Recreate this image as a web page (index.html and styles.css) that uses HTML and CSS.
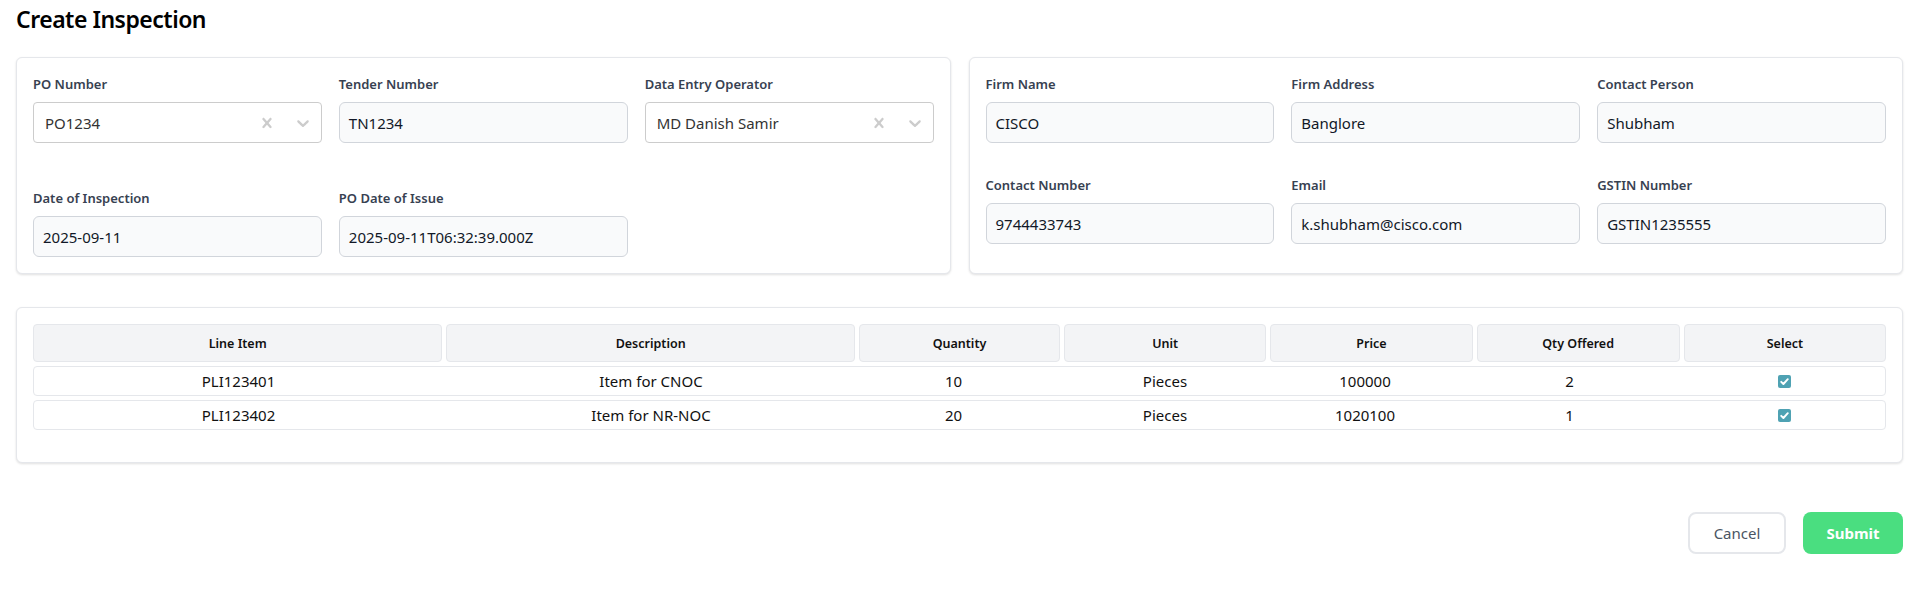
FILE: index.html
```html
<!DOCTYPE html>
<html lang="en">
<head>
<meta charset="utf-8">
<title>Create Inspection</title>
<link rel="stylesheet" href="styles.css">
</head>
<body>
<div class="page">
  <h1 class="title">Create Inspection</h1>

  <div class="cards">
    <section class="card">
      <div class="grid grid-po">
        <div class="field">
          <label class="label">PO Number</label>
          <div class="select">
            <span class="select-value">PO1234</span>
            <span class="indicator"><svg viewBox="0 0 20 20" width="20" height="20"><path d="M14.348 14.849c-0.469 0.469-1.229 0.469-1.697 0l-2.651-3.030-2.651 3.029c-0.469 0.469-1.229 0.469-1.697 0-0.469-0.469-0.469-1.229 0-1.697l2.758-3.15-2.759-3.152c-0.469-0.469-0.469-1.228 0-1.697s1.228-0.469 1.697 0l2.652 3.031 2.651-3.031c0.469-0.469 1.228-0.469 1.697 0s0.469 1.229 0 1.697l-2.758 3.152 2.758 3.15c0.469 0.469 0.469 1.229 0 1.698z"/></svg></span>
            <span class="indicator"><svg viewBox="0 0 20 20" width="20" height="20"><path d="M4.516 7.548c0.436-0.446 1.043-0.481 1.576 0l3.908 3.747 3.908-3.747c0.533-0.481 1.141-0.446 1.574 0 0.436 0.445 0.408 1.197 0 1.615-0.406 0.418-4.695 4.502-4.695 4.502-0.217 0.223-0.502 0.335-0.787 0.335s-0.57-0.112-0.789-0.335c0 0-4.287-4.084-4.695-4.502s-0.436-1.17 0-1.615z"/></svg></span>
          </div>
        </div>
        <div class="field">
          <label class="label">Tender Number</label>
          <div class="input">TN1234</div>
        </div>
        <div class="field">
          <label class="label">Data Entry Operator</label>
          <div class="select">
            <span class="select-value">MD Danish Samir</span>
            <span class="indicator"><svg viewBox="0 0 20 20" width="20" height="20"><path d="M14.348 14.849c-0.469 0.469-1.229 0.469-1.697 0l-2.651-3.030-2.651 3.029c-0.469 0.469-1.229 0.469-1.697 0-0.469-0.469-0.469-1.229 0-1.697l2.758-3.15-2.759-3.152c-0.469-0.469-0.469-1.228 0-1.697s1.228-0.469 1.697 0l2.652 3.031 2.651-3.031c0.469-0.469 1.228-0.469 1.697 0s0.469 1.229 0 1.697l-2.758 3.152 2.758 3.15c0.469 0.469 0.469 1.229 0 1.698z"/></svg></span>
            <span class="indicator"><svg viewBox="0 0 20 20" width="20" height="20"><path d="M4.516 7.548c0.436-0.446 1.043-0.481 1.576 0l3.908 3.747 3.908-3.747c0.533-0.481 1.141-0.446 1.574 0 0.436 0.445 0.408 1.197 0 1.615-0.406 0.418-4.695 4.502-4.695 4.502-0.217 0.223-0.502 0.335-0.787 0.335s-0.57-0.112-0.789-0.335c0 0-4.287-4.084-4.695-4.502s-0.436-1.17 0-1.615z"/></svg></span>
          </div>
        </div>
        <div class="field">
          <label class="label">Date of Inspection</label>
          <div class="input">2025-09-11</div>
        </div>
        <div class="field">
          <label class="label">PO Date of Issue</label>
          <div class="input">2025-09-11T06:32:39.000Z</div>
        </div>
      </div>
    </section>

    <section class="card">
      <div class="grid grid-firm">
        <div class="field">
          <label class="label">Firm Name</label>
          <div class="input">CISCO</div>
        </div>
        <div class="field">
          <label class="label">Firm Address</label>
          <div class="input">Banglore</div>
        </div>
        <div class="field">
          <label class="label">Contact Person</label>
          <div class="input">Shubham</div>
        </div>
        <div class="field">
          <label class="label">Contact Number</label>
          <div class="input">9744433743</div>
        </div>
        <div class="field">
          <label class="label">Email</label>
          <div class="input">k.shubham@cisco.com</div>
        </div>
        <div class="field">
          <label class="label">GSTIN Number</label>
          <div class="input">GSTIN1235555</div>
        </div>
      </div>
    </section>
  </div>

  <section class="card table-card">
    <div class="table">
      <div class="thead">
        <div class="th">Line Item</div>
        <div class="th">Description</div>
        <div class="th">Quantity</div>
        <div class="th">Unit</div>
        <div class="th">Price</div>
        <div class="th">Qty Offered</div>
        <div class="th">Select</div>
      </div>
      <div class="tr">
        <div class="td">PLI123401</div>
        <div class="td">Item for CNOC</div>
        <div class="td td-qty">10</div>
        <div class="td">Pieces</div>
        <div class="td td-price">100000</div>
        <div class="td td-offered">2</div>
        <div class="td"><span class="check"><svg viewBox="0 0 13 13" width="13" height="13"><path d="M3.2 6.8 L5.4 9 L9.8 4.2" fill="none" stroke="#fff" stroke-width="1.9" stroke-linecap="round" stroke-linejoin="round"/></svg></span></div>
      </div>
      <div class="tr">
        <div class="td">PLI123402</div>
        <div class="td">Item for NR-NOC</div>
        <div class="td td-qty">20</div>
        <div class="td">Pieces</div>
        <div class="td td-price">1020100</div>
        <div class="td td-offered">1</div>
        <div class="td"><span class="check"><svg viewBox="0 0 13 13" width="13" height="13"><path d="M3.2 6.8 L5.4 9 L9.8 4.2" fill="none" stroke="#fff" stroke-width="1.9" stroke-linecap="round" stroke-linejoin="round"/></svg></span></div>
      </div>
    </div>
  </section>

  <div class="actions">
    <button class="btn btn-cancel" type="button">Cancel</button>
    <button class="btn btn-submit" type="button">Submit</button>
  </div>
</div>
</body>
</html>
```

FILE: styles.css
```css
* {
  box-sizing: border-box;
}

html, body {
  margin: 0;
  background: #ffffff;
}

body {
  font-family: "Noto Sans", "Open Sans", Arial, sans-serif;
  color: #111827;
}

.page {
  padding: 3px 16px 16px 16px;
}

.title {
  margin: 0 0 22px 0;
  font-size: 23px;
  line-height: 32px;
  font-weight: 600;
  letter-spacing: -0.5px;
  color: #000000;
}

.cards {
  display: flex;
  gap: 18px;
  align-items: stretch;
}

.card {
  flex: 1 1 0;
  background: #ffffff;
  border: 1px solid #e5e7eb;
  border-radius: 6px;
  box-shadow: 0 1px 3px rgba(0, 0, 0, 0.08), 0 1px 2px rgba(0, 0, 0, 0.05);
  padding: 16px;
}

.grid {
  display: grid;
  grid-template-columns: repeat(3, 1fr);
  column-gap: 17px;
}

.grid-po {
  row-gap: 45px;
}

.grid-firm {
  row-gap: 32px;
}

.field {
  display: flex;
  flex-direction: column;
}

.label {
  font-size: 13px;
  line-height: 20px;
  font-weight: 600;
  color: #374151;
  margin-bottom: 8px;
}

.input {
  height: 41px;
  display: flex;
  align-items: center;
  padding: 0 9px;
  background: #f9fafb;
  border: 1px solid #d1d5db;
  border-radius: 6px;
  font-size: 15px;
  color: #111827;
  white-space: nowrap;
  overflow: hidden;
}

.select {
  height: 41px;
  display: flex;
  align-items: center;
  background: #ffffff;
  border: 1px solid #cccccc;
  border-radius: 4px;
}

.select-value {
  flex: 1 1 auto;
  padding: 0 10px 0 11px;
  font-size: 15px;
  color: #333333;
  white-space: nowrap;
}

.indicator {
  display: flex;
  padding: 8px;
  color: #cccccc;
}

.indicator svg {
  fill: currentColor;
  display: block;
}

.table-card {
  margin-top: 33px;
  padding: 16px 16px 32px 16px;
}

.table {
  display: flex;
  flex-direction: column;
  gap: 4px;
}

.thead,
.tr {
  display: grid;
  grid-template-columns: 409fr 408fr 201fr 202fr 202fr 203fr 202fr;
  column-gap: 4px;
}

.th {
  height: 38px;
  display: flex;
  align-items: center;
  justify-content: center;
  background: #f3f4f6;
  border: 1px solid #e5e7eb;
  border-radius: 4px;
  font-size: 12.5px;
  font-weight: 600;
  color: #111111;
}

.tr {
  height: 30px;
  border: 1px solid #e5e7eb;
  border-radius: 4px;
  align-items: center;
}

.td {
  text-align: center;
  font-size: 15px;
  color: #111111;
  display: flex;
  align-items: center;
  justify-content: center;
}

.td-qty {
  padding-right: 12px;
}

.td-price {
  padding-right: 12px;
}

.td-offered {
  padding-right: 16px;
}

.check {
  display: block;
  width: 13px;
  height: 13px;
  border-radius: 2px;
  background: #4fa2b3;
}

.check svg {
  display: block;
}

.actions {
  display: flex;
  justify-content: flex-end;
  gap: 17px;
  margin-top: 49px;
}

.btn {
  height: 42px;
  border-radius: 8px;
  font-family: inherit;
  font-size: 15px;
  cursor: pointer;
}

.btn-cancel {
  width: 98px;
  background: #ffffff;
  border: 2px solid #e5e7eb;
  color: #4b5563;
}

.btn-submit {
  width: 100px;
  background: #4ade80;
  border: none;
  color: #ffffff;
  font-weight: 700;
}
```
